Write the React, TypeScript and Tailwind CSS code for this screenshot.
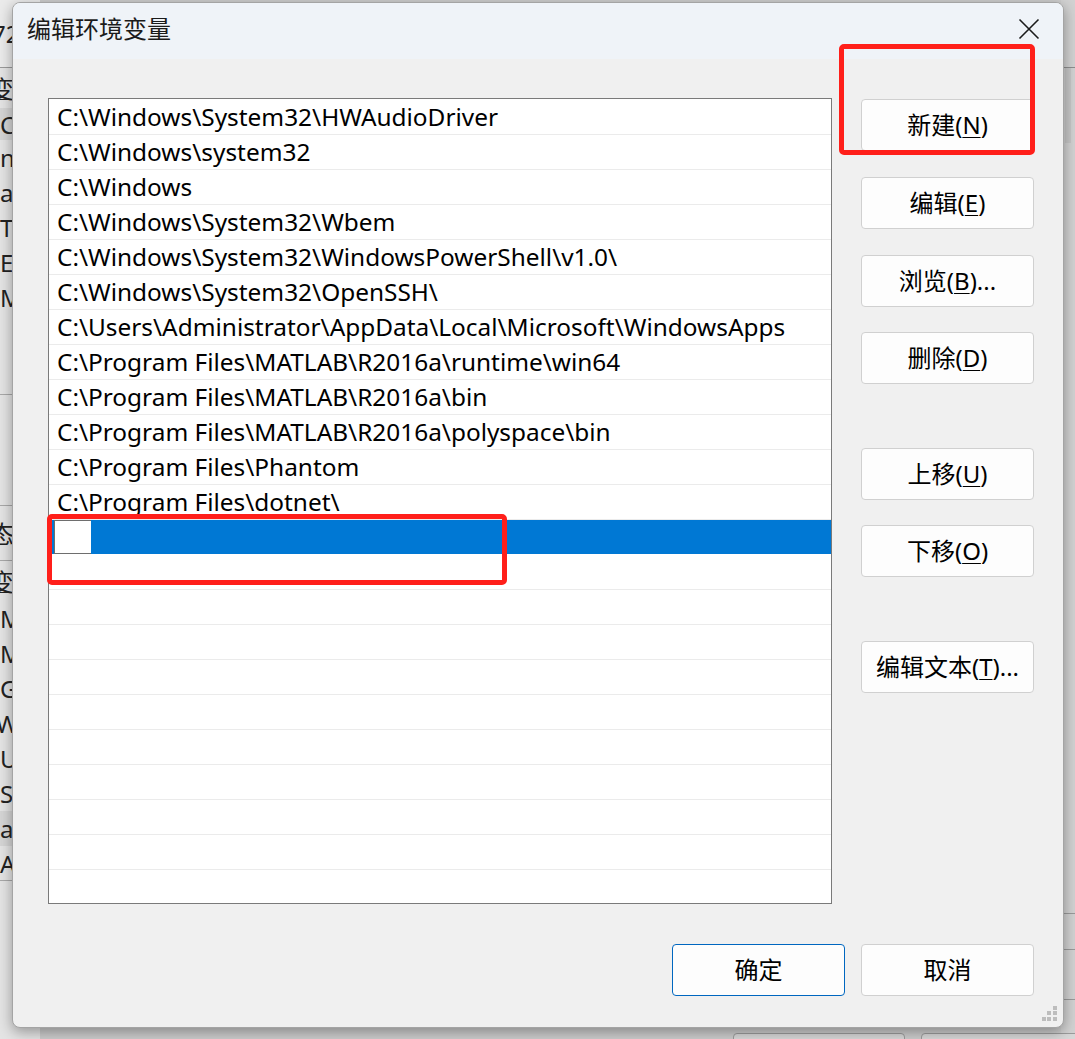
import React from 'react';

const paths = [
  'C:\\Windows\\System32\\HWAudioDriver',
  'C:\\Windows\\system32',
  'C:\\Windows',
  'C:\\Windows\\System32\\Wbem',
  'C:\\Windows\\System32\\WindowsPowerShell\\v1.0\\',
  'C:\\Windows\\System32\\OpenSSH\\',
  'C:\\Users\\Administrator\\AppData\\Local\\Microsoft\\WindowsApps',
  'C:\\Program Files\\MATLAB\\R2016a\\runtime\\win64',
  'C:\\Program Files\\MATLAB\\R2016a\\bin',
  'C:\\Program Files\\MATLAB\\R2016a\\polyspace\\bin',
  'C:\\Program Files\\Phantom',
  'C:\\Program Files\\dotnet\\',
];

const font = "font-['Noto_Sans','Noto_Sans_CJK_SC',sans-serif]";

function Btn({ label, hot, after, primary }: { label: string; hot?: string; after?: string; primary?: boolean }) {
  return (
    <button
      className={`w-[173px] h-[52px] rounded-[4px] bg-[#fdfdfd] border text-[24px] text-black flex items-center justify-center ${
        primary ? 'border-[#0067c0]' : 'border-[#d0d0d0]'
      }`}
    >
      <span>
        {label}
        {hot && (
          <>
            (<span className="underline underline-offset-[3px] decoration-1">{hot}</span>){after}
          </>
        )}
      </span>
    </button>
  );
}

export default function App() {
  const empty = Array.from({ length: 10 });

  return (
    <div className={`relative w-[1075px] h-[1039px] overflow-hidden bg-[#cdcdcd] ${font}`}>
      {/* window behind the dialog */}
      <div className="flex flex-col w-[40px] h-full bg-[#e4e4e4] text-[24px] text-[#222] leading-[35px]">
        <div className="h-[68px] border-b border-[#9a9a9a] bg-[#ebebeb] flex items-center">
          <span className="-ml-[8px]">72</span>
        </div>
        <div className="h-[40px] flex items-center -ml-[10px] underline decoration-1">变量</div>
        <div className="h-[32px] flex items-center bg-[#d5d5d5]">C</div>
        <div className="h-[35px]">n</div>
        <div className="h-[35px]">at</div>
        <div className="h-[35px]">TI</div>
        <div className="h-[35px]">EN</div>
        <div className="h-[35px]">M</div>
        <div className="h-[80px] border-b border-[#a8a8a8]" />
        <div className="h-[111px] border-b border-[#a8a8a8]" />
        <div className="h-[55px] flex items-center -ml-[10px] border-b border-[#a8a8a8]">态</div>
        <div className="h-[40px] flex items-center -ml-[10px] underline decoration-1">变量</div>
        <div className="h-[35px]">M</div>
        <div className="h-[35px]">M</div>
        <div className="h-[35px]">G</div>
        <div className="h-[35px] -ml-[4px]">Wi</div>
        <div className="h-[35px]">U</div>
        <div className="h-[35px]">S</div>
        <div className="h-[35px] bg-[#d5d5d5]">at</div>
        <div className="h-[35px] border-b border-[#a8a8a8]">A</div>
      </div>

      {/* right and bottom pieces of the window behind */}
      <div className="absolute right-0 top-0 w-[14px] h-full bg-[#d2d2d2] flex flex-col">
        <div className="h-[68px] border-b border-[#8e8e8e]" />
        <div className="ml-[4px] w-[6px] h-[75px] bg-[#c6c6c6]" />
        <div className="flex-1" />
        <div className="h-[36px] border-t border-[#9a9a9a]" />
        <div className="h-[50px] border-t border-[#9a9a9a]" />
        <div className="h-[40px] border-t border-[#9a9a9a]" />
      </div>
      <div className="absolute left-[733px] top-[1033px] w-[172px] h-[20px] rounded-[4px] border border-[#9c9c9c] bg-[#d8d8d8]" />
      <div className="absolute left-[921px] top-[1033px] w-[172px] h-[20px] rounded-[4px] border border-[#9c9c9c] bg-[#d8d8d8]" />

      {/* dialog */}
      <div className="absolute left-[12px] top-[2px] w-[1052px] h-[1026px] rounded-[8px] border border-[#a4a4a4] bg-[#f0f0f0] shadow-[0_4px_14px_rgba(0,0,0,0.35)] overflow-hidden flex flex-col">
        <div className="h-[56px] shrink-0 bg-[#eff3f8] flex items-center justify-between pl-[14px] pr-[23px] pb-[4px]">
          <span className="text-[24px] text-[#1b1b1b]">编辑环境变量</span>
          <svg width="22" height="22" viewBox="0 0 22 22">
            <path d="M1.5 1.5 L20.5 20.5 M20.5 1.5 L1.5 20.5" stroke="#1b1b1b" strokeWidth="1.6" fill="none" />
          </svg>
        </div>

        <div className="flex-1 flex flex-col pl-[35px] pr-[29px] pt-[39px]">
          <div className="flex gap-[29px]">
            {/* list */}
            <div className="w-[784px] h-[806px] bg-white border border-[#7a7a7a] overflow-hidden pt-[1px]">
              {paths.map((p) => (
                <div
                  key={p}
                  className="h-[35px] border-b border-[#ebebeb] pl-[8px] flex items-center pt-[1px] text-[24.4px] text-black whitespace-nowrap"
                >
                  {p}
                </div>
              ))}
              <div className="h-[35px] border-b border-white">
                <div className="h-[34px] bg-[#0078d4] flex">
                  <div className="ml-[5px] w-[37px] h-[34px] bg-white border border-r-0 border-[#6e6e6e]" />
                </div>
              </div>
              {empty.map((_, i) => (
                <div key={i} className="h-[35px] border-b border-[#ebebeb]" />
              ))}
            </div>

            {/* side buttons */}
            <div className="flex flex-col pt-[1px]">
              <Btn label="新建" hot="N" />
              <div className="mt-[26px]"><Btn label="编辑" hot="E" /></div>
              <div className="mt-[26px]"><Btn label="浏览" hot="B" after="..." /></div>
              <div className="mt-[25px]"><Btn label="删除" hot="D" /></div>
              <div className="mt-[64px]"><Btn label="上移" hot="U" /></div>
              <div className="mt-[25px]"><Btn label="下移" hot="O" /></div>
              <div className="mt-[64px]"><Btn label="编辑文本" hot="T" after="..." /></div>
            </div>
          </div>

          <div className="flex justify-end gap-[16px] mt-[40px]">
            <Btn label="确定" primary />
            <Btn label="取消" />
          </div>
        </div>

        {/* resize grip */}
        <svg width="16" height="16" viewBox="0 0 16 16" className="absolute right-[5px] bottom-[5px]">
          <g fill="#bdbdbd">
            <rect x="11" y="0" width="4" height="4" />
            <rect x="5" y="5" width="4" height="4" />
            <rect x="11" y="5" width="4" height="4" />
            <rect x="0" y="11" width="4" height="4" />
            <rect x="5" y="11" width="4" height="4" />
            <rect x="11" y="11" width="4" height="4" />
          </g>
        </svg>

        {/* red annotations */}
        <div className="absolute left-[826px] top-[41px] w-[196px] h-[111px] rounded-[5px] border-[5px] border-[#ff1f1a]" />
        <div className="absolute left-[34px] top-[511px] w-[460px] h-[71px] rounded-[5px] border-[5px] border-[#ff1f1a]" />
      </div>
    </div>
  );
}
